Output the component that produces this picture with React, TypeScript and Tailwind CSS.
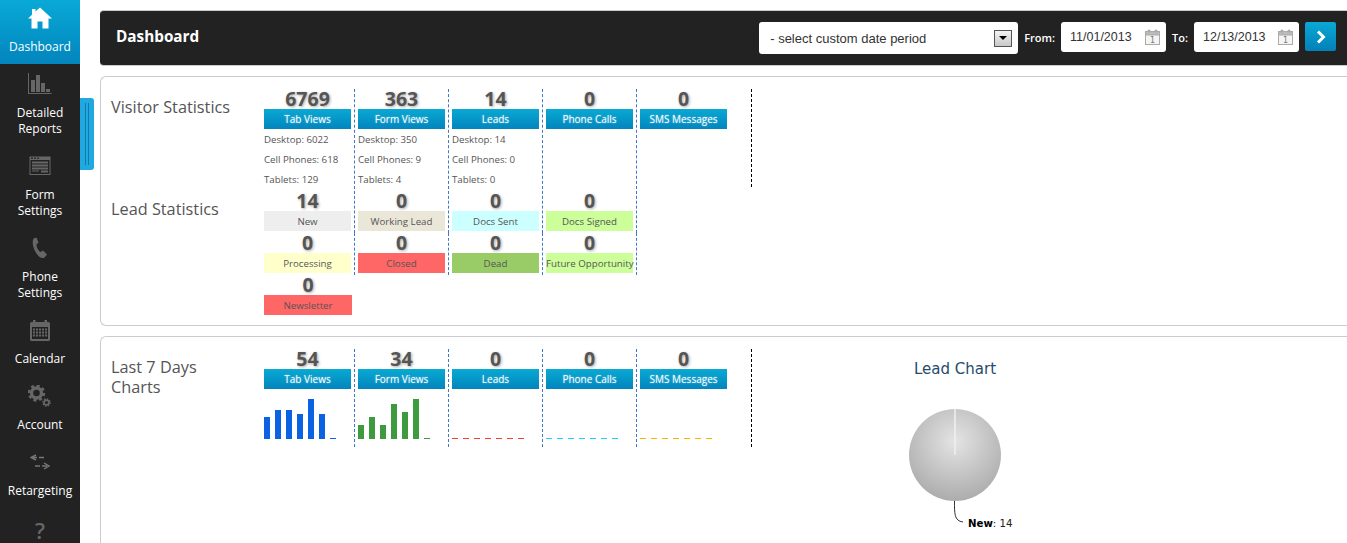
import React from "react";

const Icons: Record<string, React.ReactNode> = {
  home: (
    <svg width="24" height="22" viewBox="0 0 24 22" fill="#fff">
      <path d="M12 0.5 L24 11.5 L20.5 11.5 L20.5 21.5 L14.5 21.5 L14.5 14.5 L9.5 14.5 L9.5 21.5 L3.5 21.5 L3.5 11.5 L0 11.5 L4 7.8 L4 2 L7.5 2 L7.5 4.6 Z" />
    </svg>
  ),
  bars: (
    <svg width="24" height="22" viewBox="0 0 24 22" fill="#666">
      <path d="M0 0 H1 V20 H23.5 V21 H0 Z" />
      <rect x="3" y="7" width="4" height="12" />
      <rect x="8" y="2" width="4" height="17" />
      <rect x="13" y="10" width="4" height="9" />
      <rect x="18" y="16" width="4" height="3" />
    </svg>
  ),
  form: (
    <svg width="22" height="20" viewBox="0 0 22 20" fill="#666">
      <path fillRule="evenodd" d="M0.5 0.5 H21.5 V19 H0.5 Z M1.5 4 V18 H20.5 V4 Z" />
      <rect x="2" y="1.6" width="2" height="1.2" fill="#222" />
      <rect x="5" y="1.6" width="2" height="1.2" fill="#222" />
      <rect x="8" y="1.6" width="2" height="1.2" fill="#222" />
      <rect x="3" y="5.5" width="16" height="2" />
      <rect x="3" y="8.5" width="16" height="2" />
      <rect x="3" y="11.5" width="16" height="2" />
      <rect x="12" y="14.5" width="7" height="2" />
      <rect x="3" y="14.5" width="7" height="1" />
    </svg>
  ),
  phone: (
    <svg width="16" height="22" viewBox="0 0 16 22" fill="#666">
      <path d="M1.5 1.5 L4.5 0.5 L6.5 5.5 L4.5 7.5 C4.5 10.5 6.5 14 8.5 15 L11 13.5 L15 17.5 L12.5 20.5 C10 22 7 20.5 4.5 16.5 C1.5 12 -0.5 6 1.5 1.5 Z" />
    </svg>
  ),
  calendar: (
    <svg width="20" height="21" viewBox="0 0 20 21" fill="#666">
      <rect x="3" y="0" width="2.5" height="4" />
      <rect x="14.5" y="0" width="2.5" height="4" />
      <path fillRule="evenodd" d="M1.5 2 H18.5 Q20 2 20 3.5 V19.5 Q20 21 18.5 21 H1.5 Q0 21 0 19.5 V3.5 Q0 2 1.5 2 Z M2 7 V19 H18 V7 Z" />
      {[8.5, 11.5, 14.5].map((y) =>
        [3, 6, 9, 12, 15].map((x) => <rect key={`${x}-${y}`} x={x} y={y} width="2" height="2" />)
      )}
    </svg>
  ),
  account: (
    <svg width="24" height="22" viewBox="0 0 24 22">
      <circle cx="8.5" cy="8" r="5" fill="none" stroke="#666" strokeWidth="3.4" />
      <circle cx="8.5" cy="8" r="7.4" fill="none" stroke="#666" strokeWidth="2.6" strokeDasharray="3 2.8" />
      <circle cx="18.5" cy="17.5" r="2.4" fill="none" stroke="#666" strokeWidth="1.6" />
      <circle cx="18.5" cy="17.5" r="3.6" fill="none" stroke="#666" strokeWidth="1.4" strokeDasharray="1.5 1.3" />
    </svg>
  ),
  retarget: (
    <svg width="20" height="16" viewBox="0 0 20 16" fill="none" stroke="#777" strokeWidth="1.4">
      <path d="M6 1 L1 3.5 L6 6" />
      <path d="M3 3.5 H7 M9 3.5 H14" />
      <path d="M14 9 L19 12 L14 15" />
      <path d="M5 12 H10 M12 12 H17" />
    </svg>
  ),
};

const navItems = [
  { icon: "home", lines: ["Dashboard"], active: true },
  { icon: "bars", lines: ["Detailed", "Reports"] },
  { icon: "form", lines: ["Form", "Settings"] },
  { icon: "phone", lines: ["Phone", "Settings"] },
  { icon: "calendar", lines: ["Calendar"] },
  { icon: "account", lines: ["Account"] },
  { icon: "retarget", lines: ["Retargeting"] },
];

const NUM = "h-5 text-center text-[19.5px] leading-5 font-bold text-[#555] [text-shadow:1px_1px_3px_rgba(0,0,0,0.35)]";
const BLUE_BTN =
  "h-5 bg-gradient-to-b from-[#0aa9d3] to-[#0385bd] text-center text-[10px] leading-5 font-medium text-white [text-shadow:0_0_2px_rgba(255,255,255,0.5)]";
const CELL = "w-[94px] shrink-0 px-[3px] border-r border-dashed border-[#3f78c8]";
const LABEL = "h-5 text-center text-[9.7px] leading-[22px] whitespace-nowrap text-[#555]";

const visitors = [
  { n: "6769", label: "Tab Views", rows: ["Desktop: 6022", "Cell Phones: 618", "Tablets: 129"] },
  { n: "363", label: "Form Views", rows: ["Desktop: 350", "Cell Phones: 9", "Tablets: 4"] },
  { n: "14", label: "Leads", rows: ["Desktop: 14", "Cell Phones: 0", "Tablets: 0"] },
  { n: "0", label: "Phone Calls", rows: [] },
];

const leads = [
  [
    { n: "14", label: "New", bg: "bg-[#eeeeee]" },
    { n: "0", label: "Working Lead", bg: "bg-[#eae7d9]" },
    { n: "0", label: "Docs Sent", bg: "bg-[#ccffff]" },
    { n: "0", label: "Docs Signed", bg: "bg-[#ccff99]" },
  ],
  [
    { n: "0", label: "Processing", bg: "bg-[#ffffcc]" },
    { n: "0", label: "Closed", bg: "bg-[#ff6666]" },
    { n: "0", label: "Dead", bg: "bg-[#99cc66]" },
    { n: "0", label: "Future Opportunity", bg: "bg-[#ccff99]" },
  ],
];

const Spark = ({ values, color, dashed }: { values?: number[]; color: string; dashed?: boolean }) => (
  <svg width="87" height="50" viewBox="0 0 87 50" className="block">
    {dashed
      ? [0, 1, 2, 3, 4, 5, 6].map((i) => <rect key={i} x={i * 11} y="49" width="6" height="1" fill={color} />)
      : values!.map((h, i) => <rect key={i} x={i * 11} y={50 - h} width="6" height={h} fill={color} />)}
  </svg>
);

const week = [
  { n: "54", label: "Tab Views", values: [22, 29, 29, 25, 40, 25, 1], color: "#0b62e2" },
  { n: "34", label: "Form Views", values: [14, 22, 14, 35, 27, 40, 1], color: "#3d9a3f" },
  { n: "0", label: "Leads", color: "#f5402c", dashed: true },
  { n: "0", label: "Phone Calls", color: "#1cd0f5", dashed: true },
];

const CalIcon = () => (
  <svg width="15" height="16" viewBox="0 0 15 16" className="shrink-0">
    <rect x="0.5" y="2.5" width="14" height="13" fill="#f4f4f4" stroke="#aaa" />
    <rect x="0.5" y="2.5" width="14" height="3.5" fill="#bbb" stroke="#aaa" />
    <circle cx="4" cy="2" r="1.6" fill="#aaa" />
    <circle cx="11" cy="2" r="1.6" fill="#aaa" />
    <text x="7.5" y="14" textAnchor="middle" fontSize="8" fill="#777" fontFamily="'DejaVu Sans', sans-serif">1</text>
  </svg>
);

const DateBox = ({ value }: { value: string }) => (
  <div className="flex h-[30px] w-[105px] items-center justify-between rounded-[3px] bg-white pl-[9px] pr-[6px] font-['Liberation_Sans',sans-serif] text-[12.5px] text-[#333]">
    <span className="pt-[1px]">{value}</span>
    <CalIcon />
  </div>
);

const App: React.FC = () => {
  return (
    <div className="relative flex h-[543px] w-[1347px] overflow-hidden bg-white font-['Open_Sans',sans-serif]">
      {/* Sidebar */}
      <div className="w-[80px] shrink-0 bg-[#222222]">
        {navItems.map((item) => (
          <div
            key={item.icon}
            className={`mb-[2px] pb-[9px] text-center text-[12px] leading-4 text-white ${
              item.active ? "bg-gradient-to-b from-[#0aa9d6] to-[#0385bd]" : ""
            }`}
          >
            <div className="flex h-[39px] items-center justify-center pb-[3px]">{Icons[item.icon]}</div>
            {item.lines.map((l) => (
              <div key={l}>{l}</div>
            ))}
          </div>
        ))}
        <div className="mt-[12px] text-center text-[22px] leading-5 font-semibold text-[#666]">?</div>
      </div>

      {/* Collapse handle */}
      <div className="absolute left-[80px] top-[98px] flex h-[72px] w-[14px] gap-[2px] rounded-r-[3px] bg-[#1fa9e0] pl-[5px]">
        <div className="my-[5px] w-px bg-[#1478a8]" />
        <div className="my-[5px] w-px bg-[#1478a8]" />
      </div>

      {/* Main */}
      <div className="min-w-0 flex-1 pl-[20px] pt-[10px]">
        {/* Header */}
        <div className="mb-[10px] flex h-[56px] items-center justify-between rounded-l-[4px] border-y border-[#cccccc] bg-[#222222] pl-[16px] pr-[11px]">
          <div className="pb-[4px] text-[15.3px] font-bold text-white">Dashboard</div>
          <div className="flex items-start">
            <div className="mr-[6px] flex h-[32px] w-[259px] items-center justify-between rounded-[3px] bg-white pl-[11px] pr-[6px] font-['Liberation_Sans',sans-serif] text-[13px] text-[#333]">
              <span className="pt-[1px]">- select custom date period</span>
              <div className="flex h-[17px] w-[18px] items-center justify-center border border-[#555] bg-gradient-to-b from-[#f4f4f4] to-[#c8c8c8]">
                <div className="h-0 w-0 border-x-[4px] border-t-[4px] border-x-transparent border-t-black" />
              </div>
            </div>
            <div className="mr-[6px] h-[30px] text-[11px] leading-[32px] font-semibold text-white">From:</div>
            <DateBox value="11/01/2013" />
            <div className="ml-[6px] mr-[6px] h-[30px] text-[11px] leading-[32px] font-semibold text-white">To:</div>
            <DateBox value="12/13/2013" />
            <div className="ml-[6px] flex h-[29px] w-[31px] items-center justify-center rounded-[2px] bg-gradient-to-b from-[#0aa9d6] to-[#0480b8]">
              <svg width="10" height="14" viewBox="0 0 10 14" fill="none" stroke="#fff" strokeWidth="3">
                <path d="M2 1.5 L7.5 7 L2 12.5" />
              </svg>
            </div>
          </div>
        </div>

        {/* Statistics card */}
        <div className="mb-[10px] h-[250px] rounded-l-[6px] border border-r-0 border-[#cccccc] pl-[10px] pt-[12px]">
          <div className="flex">
            <div className="w-[150px] shrink-0 pt-[6px] text-[16.3px] leading-6 text-[#555]">Visitor Statistics</div>
            <div className="flex">
              {visitors.map((v) => (
                <div key={v.label} className={`${CELL} h-[100px]`}>
                  <div className={NUM}>{v.n}</div>
                  <div className={BLUE_BTN}>{v.label}</div>
                  <div className="pt-[1px]">
                    {v.rows.map((r) => (
                      <div key={r} className="text-[9.7px] leading-5 text-[#555]">
                        {r}
                      </div>
                    ))}
                  </div>
                </div>
              ))}
              <div className="h-[98px] w-[115px] shrink-0 border-r border-dashed border-black px-[3px]">
                <div className={`${NUM} w-[87px]`}>0</div>
                <div className={`${BLUE_BTN} w-[87px]`}>SMS Messages</div>
              </div>
            </div>
          </div>
          <div className="mt-[2px] flex">
            <div className="w-[150px] shrink-0 pt-[6px] text-[16.3px] leading-6 text-[#555]">Lead Statistics</div>
            <div>
              {leads.map((row, i) => (
                <div key={i} className="flex">
                  {row.map((c) => (
                    <div key={c.label} className={`${CELL} pb-[2px]`}>
                      <div className={NUM}>{c.n}</div>
                      <div className={`${LABEL} ${c.bg}`}>{c.label}</div>
                    </div>
                  ))}
                </div>
              ))}
              <div className="w-[94px] px-[3px]">
                <div className={NUM}>0</div>
                <div className={`${LABEL} bg-[#ff6666]`}>Newsletter</div>
              </div>
            </div>
          </div>
        </div>

        {/* Last 7 days card */}
        <div className="flex h-[300px] rounded-l-[6px] border border-r-0 border-[#cccccc] pl-[10px] pt-[12px]">
          <div className="w-[150px] shrink-0 pt-[8px] text-[16.3px] leading-5 text-[#555]">
            Last 7 Days
            <br />
            Charts
          </div>
          <div className="flex h-[98px]">
            {week.map((w) => (
              <div key={w.label} className={CELL}>
                <div className={NUM}>{w.n}</div>
                <div className={BLUE_BTN}>{w.label}</div>
                <Spark values={w.values} color={w.color} dashed={w.dashed} />
              </div>
            ))}
            <div className="w-[115px] shrink-0 border-r border-dashed border-black px-[3px]">
              <div className={`${NUM} w-[87px]`}>0</div>
              <div className={`${BLUE_BTN} w-[87px]`}>SMS Messages</div>
              <Spark color="#f5b400" dashed />
            </div>
          </div>
          {/* Lead chart */}
          <div className="ml-[53px] w-[300px] pt-[10px] text-center">
            <div className="font-['DejaVu_Sans',sans-serif] text-[15px] leading-5 text-[#274b6d]">Lead Chart</div>
            <svg width="300" height="170" className="-mt-[1px] block" viewBox="0 0 300 170">
              <defs>
                <radialGradient id="pieFill" cx="50%" cy="35%" r="70%">
                  <stop offset="0%" stopColor="#e4e4e4" />
                  <stop offset="100%" stopColor="#a8a8a8" />
                </radialGradient>
              </defs>
              <circle cx="150" cy="77" r="46" fill="url(#pieFill)" />
              <line x1="150" y1="31" x2="150" y2="77" stroke="#f0f0f0" strokeWidth="1.5" />
              <path d="M149.5 123 C149.5 135 149 143 158 144" fill="none" stroke="#333" strokeWidth="1" />
              <text x="163" y="149" fontSize="10.2" fill="#222" textAnchor="start" fontFamily="'DejaVu Sans', sans-serif">
                <tspan fontWeight="bold" fill="#000">New</tspan>: 14
              </text>
            </svg>
          </div>
        </div>
      </div>
    </div>
  );
};

export default App;
